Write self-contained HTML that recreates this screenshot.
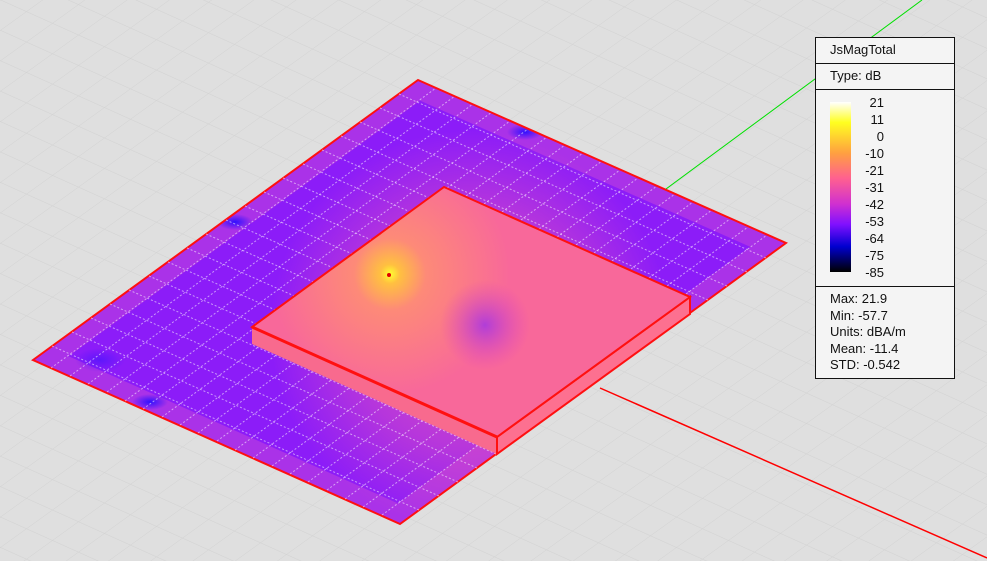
<!DOCTYPE html>
<html><head><meta charset="utf-8"><style>
html,body{margin:0;padding:0;background:#dfdfdf;}
body{width:987px;height:561px;position:relative;overflow:hidden;font-family:"Liberation Sans",Arial,sans-serif;}
svg{position:absolute;left:0;top:0;}
.leg{position:absolute;left:815px;top:37px;width:138px;height:340px;background:#f4f4f4;border:1px solid #111;font-size:13px;color:#111;}
.leg .h{height:25px;border-bottom:1px solid #111;line-height:24px;padding-left:14px;}
.leg .bar{position:absolute;left:14px;top:64px;width:21px;height:170px;background:linear-gradient(#fff 0%,#ffff20 12%,#ffa040 30%,#ff6090 45%,#d030d0 60%,#8010ff 72%,#0000d0 85%,#000 100%);}
.leg .nums{position:absolute;left:28px;top:56px;width:40px;text-align:right;line-height:17px;}
.leg .stats{position:absolute;left:0;top:248px;width:138px;border-top:1px solid #111;padding:4px 0 0 14px;line-height:16.5px;box-sizing:border-box;}
</style></head><body>
<svg width="987" height="561" viewBox="0 0 987 561">
<defs>
<pattern id="g" width="26" height="26" patternUnits="userSpaceOnUse" patternTransform="matrix(1,-0.72,1,0.45,0,0)">
<path d="M0 0H26M0 0V26" stroke="#d2d2d2" stroke-width="1" fill="none"/>
</pattern>
<clipPath id="pc"><polygon points="33,360 418,80 786,243 400,524"/></clipPath>
<radialGradient id="glow" cx="470" cy="330" r="200" gradientUnits="userSpaceOnUse">
<stop offset="0" stop-color="#f060b0" stop-opacity="0.9"/><stop offset="0.6" stop-color="#e050c0" stop-opacity="0.5"/><stop offset="1" stop-color="#e050c0" stop-opacity="0"/>
</radialGradient>
<radialGradient id="hot" cx="390" cy="274" r="120" gradientUnits="userSpaceOnUse">
<stop offset="0" stop-color="#ffff30"/><stop offset="0.08" stop-color="#ffc040"/><stop offset="0.3" stop-color="#fd8a78"/><stop offset="1" stop-color="#f8689a"/>
</radialGradient>
<radialGradient id="pur" cx="485" cy="325" r="45" gradientUnits="userSpaceOnUse">
<stop offset="0" stop-color="#a838e0" stop-opacity="0.9"/><stop offset="1" stop-color="#e040c0" stop-opacity="0"/>
</radialGradient>
<radialGradient id="blu" r="0.5"><stop offset="0" stop-color="#3010ff"/><stop offset="1" stop-color="#3010ff" stop-opacity="0"/></radialGradient>
</defs>
<rect width="987" height="561" fill="url(#g)"/>
<line x1="586" y1="248" x2="922" y2="0" stroke="#00e000" stroke-width="1"/>
<line x1="600" y1="388" x2="987" y2="558" stroke="#ff0000" stroke-width="1.5"/>
<g clip-path="url(#pc)">
<rect width="987" height="561" fill="#8c1cf8"/>
<polygon points="33,360 418,80 786,243 400,524" fill="none" stroke="#b238e4" stroke-width="36" stroke-opacity="0.8"/>
<rect width="987" height="561" fill="url(#glow)"/>
<ellipse cx="150" cy="402" rx="18" ry="8" fill="url(#blu)"/>
<ellipse cx="235" cy="222" rx="18" ry="8" fill="url(#blu)"/>
<ellipse cx="525" cy="132" rx="18" ry="8" fill="url(#blu)"/>
<ellipse cx="100" cy="360" rx="25" ry="12" fill="url(#blu)" opacity="0.5"/>
</g>
<polygon points="33,360 418,80 786,243 400,524" fill="none" stroke="#ff1010" stroke-width="2"/>
<g stroke="#ffffff" stroke-opacity="0.55" stroke-width="1" stroke-dasharray="2,2">
<path d="M51,368L436,88M70,376L455,96M88,384L473,104M107,392L492,112M125,401L510,121M143,409L528,129M162,417L547,137M180,425L565,145M198,433L583,153M217,441L602,161M235,450L620,170M253,458L638,178M272,466L657,186M290,474L675,194M308,482L693,202M327,490L712,210M345,499L730,219M363,507L748,227M382,515L767,235"/>
<path d="M52,346L419,510M72,332L439,496M91,318L458,482M110,304L477,468M129,290L496,454M149,276L516,440M168,262L535,426M187,248L554,412M206,234L573,398M226,220L593,384M245,206L612,370M264,192L631,356M283,178L650,342M303,164L670,328M322,150L689,314M341,136L708,300M360,122L727,286M380,108L747,272M399,94L766,258"/>
</g>
<polygon points="252,327 497,437 497,454 252,344" fill="#f86a8e"/>
<polygon points="497,437 690,297 690,314 497,454" fill="#fd7090" stroke="#ff1010" stroke-width="2"/>
<polygon points="252,327 444,187 690,297 497,437" fill="url(#hot)" stroke="#ff1010" stroke-width="2"/>
<polygon points="252,327 444,187 690,297 497,437" fill="url(#pur)"/>
<line x1="252" y1="327" x2="497" y2="437" stroke="#ff1010" stroke-width="3"/>
<line x1="497" y1="437" x2="497" y2="454" stroke="#ff1010" stroke-width="2"/>
<circle cx="389" cy="275" r="2" fill="#e00000"/>
</svg>
<div class="leg">
<div class="h">JsMagTotal</div>
<div class="h">Type: dB</div>
<div class="bar"></div>
<div class="nums">21<br>11<br>0<br>-10<br>-21<br>-31<br>-42<br>-53<br>-64<br>-75<br>-85</div>
<div class="stats">Max: 21.9<br>Min: -57.7<br>Units: dBA/m<br>Mean: -11.4<br>STD: -0.542</div>
</div>
</body></html>
